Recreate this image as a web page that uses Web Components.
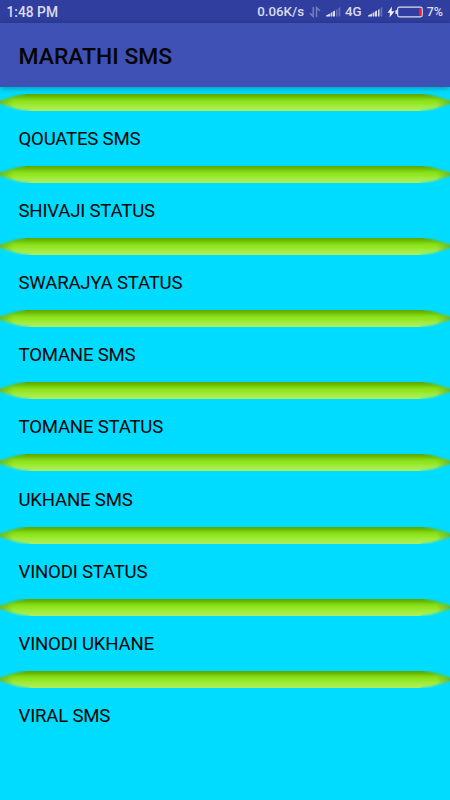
<!DOCTYPE html>
<html lang="en">
<head>
<meta charset="utf-8">
<title>Marathi SMS</title>
<style>
html,body{margin:0;height:100%;background:#00dcff}
body{font-family:Roboto,"Liberation Sans",sans-serif;overflow:hidden}
</style>
</head>
<body>
<sms-app></sms-app>
<script>
const define = (name, html) => {
  const t = document.createElement('template');
  t.innerHTML = html;
  customElements.define(name, class extends HTMLElement {
    constructor() {
      super();
      this.attachShadow({mode: 'open'}).appendChild(t.content.cloneNode(true));
    }
  });
};

define('status-bar', `
<style>
:host{display:flex;align-items:center;height:23px;padding:1px 7px 0 6.5px;box-sizing:border-box;background:#303f9f;color:#d9dcf0;font-size:13.3px;line-height:22px;font-weight:500;white-space:nowrap}
svg{display:block;flex:none}
.time{flex:1;font-size:13.8px}
.rate{margin-right:5px}
.sig{margin-right:4px}
.net{margin-right:6px}
.sig2{margin-right:4px}
.batt{margin-right:4px}
.pct{font-size:12.5px}
</style>
<span class="time">1:48 PM</span>
<span class="rate">0.06K/s</span>
<svg style="margin-right:5px" width="12" height="12" viewBox="0 0 12 12" fill="none" stroke="#7781c2" stroke-width="1.4"><path d="M4.200 1v9.500L1 7.300M7.500 11V1.500L10.700 4.700"/></svg>
<svg class="sig" width="15" height="10" viewBox="0 0 15 10"><path d="M0 9.500V8.500L4 6.500v3zM4.600 9.500V6L6.400 5v4.500zM7 9.500V4.600L9 3.400v6.100z" fill="#d9dcf0"/><path d="M10 9.500V3L11.500 2v7.500zM12.500 9.500V1L14.300 0v9.500z" fill="#6670b8"/></svg>
<span class="net">4G</span>
<svg class="sig2" width="15" height="10" viewBox="0 0 15 10"><path d="M0 9.500V8.500L4 6.500v3zM4.600 9.500V6L6.400 5v4.500zM7 9.500V4.600L9 3.400v6.100zM10 9.500V3L11.500 2v7.500z" fill="#d9dcf0"/><path d="M12.500 9.500V1L14.300 0v9.500z" fill="#6670b8"/></svg>
<svg class="batt" width="36" height="12" viewBox="0 0 36 12"><path d="M5 .5L.5 6.700H3L2.500 11.500L7.500 5.300H4.500z" fill="#f4f5ff"/><rect x="10.600" y="1.200" width="24.600" height="9.600" rx="1.800" fill="none" stroke="#d9dcf0" stroke-width="1.200"/><rect x="8.400" y="4" width="1.800" height="4" rx=".6" fill="#d9dcf0"/><rect x="32" y="2.300" width="2.200" height="7.400" fill="#f81c1c"/></svg>
<span class="pct">7%</span>`);

define('title-bar', `
<style>
:host{display:flex;align-items:center;height:64px;padding:2px 18.500px 0;box-sizing:border-box;background:#3f51b5;color:#050505;font-size:22.900px;font-weight:500;box-shadow:0 1px 6px rgba(0,0,0,.35);position:relative}
</style><slot></slot>`);

define('green-divider', `
<style>
:host{display:block;height:17px}
svg{display:block;width:100%;height:17px}
</style>
<svg viewBox="0 0 450 17">
<defs>
<linearGradient id="g" x1="0" y1="0" x2="0" y2="17" gradientUnits="userSpaceOnUse"><stop offset="0" stop-color="#5ea400"/><stop offset=".12" stop-color="#66b204"/><stop offset=".34" stop-color="#84de14"/><stop offset=".5" stop-color="#91e620"/><stop offset=".8" stop-color="#a5ec48"/><stop offset="1" stop-color="#aff05c"/></linearGradient>
<linearGradient id="e" x1="0" x2="450" y1="0" y2="0" gradientUnits="userSpaceOnUse"><stop offset="0" stop-color="#5a9a20" stop-opacity=".6"/><stop offset=".03" stop-color="#5a9a20" stop-opacity="0"/><stop offset=".97" stop-color="#5a9a20" stop-opacity="0"/><stop offset="1" stop-color="#5a9a20" stop-opacity=".6"/></linearGradient>
<filter id="b" x="-12" y="-4" width="474" height="25" filterUnits="userSpaceOnUse"><feGaussianBlur stdDeviation="1.2 .8"/></filter>
<clipPath id="c"><rect width="450" height="17"/></clipPath>
</defs>
<g clip-path="url(#c)"><g filter="url(#b)">
<path d="M-8 6.500H0C8 4.500 14 1.500 25 0V-4H425V0C436 1.500 442 4.500 450 6.500H458V10H450C440 13 432 16 420 17V21H30V17C18 16 10 13 0 10H-8Z" fill="url(#g)"/>
<path d="M-8 6.500H0C8 4.500 14 1.500 25 0V-4H425V0C436 1.500 442 4.500 450 6.500H458V10H450C440 13 432 16 420 17V21H30V17C18 16 10 13 0 10H-8Z" fill="url(#e)"/>
</g></g>
</svg>`);

define('sms-category', `
<style>
:host{display:flex;flex-direction:column;height:72.08px}
.label{flex:1;display:flex;align-items:center;padding:1px 18.500px 0;font-size:18.600px;letter-spacing:-.2px;color:#050505}
</style>
<green-divider></green-divider>
<div class="label"><slot></slot></div>`);

define('sms-app', `
<style>
:host{display:flex;flex-direction:column;height:800px;background:#00dcff}
main{padding-top:7.100px}
</style>
<status-bar></status-bar>
<title-bar>MARATHI SMS</title-bar>
<main>
<sms-category>QOUATES SMS</sms-category>
<sms-category>SHIVAJI STATUS</sms-category>
<sms-category>SWARAJYA STATUS</sms-category>
<sms-category>TOMANE SMS</sms-category>
<sms-category>TOMANE STATUS</sms-category>
<sms-category>UKHANE SMS</sms-category>
<sms-category>VINODI STATUS</sms-category>
<sms-category>VINODI UKHANE</sms-category>
<sms-category>VIRAL SMS</sms-category>
</main>`);
</script>
</body>
</html>
